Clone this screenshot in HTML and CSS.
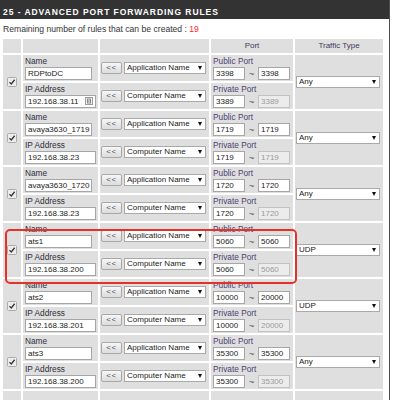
FILE: index.html
```html
<!DOCTYPE html>
<html>
<head>
<meta charset="utf-8">
<link rel="stylesheet" href="styles.css">
</head>
<body>
<div class="page">
  <div class="titlebar">25 - ADVANCED PORT FORWARDING RULES</div>
  <p class="remaining">Remaining number of rules that can be created : <span class="count">19</span></p>
  <table class="rules">
    <colgroup>
      <col class="c-chk"><col class="c-name"><col class="c-app"><col class="c-port"><col class="c-traffic">
    </colgroup>
    <thead>
      <tr><th></th><th></th><th></th><th>Port</th><th>Traffic Type</th></tr>
    </thead>
    <tbody>
      <!-- rule 1 -->
      <tr>
        <td rowspan="2" class="chk"><svg class="cb" width="10" height="10" viewBox="0 0 10 10"><rect x="0.5" y="0.5" width="9" height="9" rx="1" fill="#ececec" stroke="#ababab"/><path d="M2.5 5.2 L4.3 7 L7.6 2.8" fill="none" stroke="#3a3a3a" stroke-width="1.4"/></svg></td>
        <td><div class="cell"><div class="lbl">Name</div><input class="in in-name" type="text" value="RDPtoDC"></div></td>
        <td class="app"><div class="appbox"><button class="btn">&lt;&lt;</button><span class="selwrap"><select class="sel"><option>Application Name</option></select></span></div></td>
        <td><div class="cell portcell"><div class="lbl plbl">Public Port</div><div class="range"><input class="in in-port" type="text" value="3398"><span class="tilde">~</span><input class="in in-port" type="text" value="3398"></div></div></td>
        <td rowspan="2" class="traffic"><span class="selwrap"><select class="sel sel-wide"><option>Any</option></select></span></td>
      </tr>
      <tr>
        <td><div class="cell"><div class="lbl">IP Address</div><span class="ipwrap"><input class="in in-ip" type="text" value="192.168.38.11"><svg class="ipicon" width="8" height="8" viewBox="0 0 8 8"><rect x="0.5" y="0.5" width="7" height="7" fill="#f2f2f2" stroke="#9c9c9c"/><rect x="2.5" y="2" width="3" height="4" fill="none" stroke="#8a8a8a"/><line x1="4" y1="3" x2="4" y2="5" stroke="#8a8a8a"/></svg></span></div></td>
        <td class="app"><div class="appbox"><button class="btn">&lt;&lt;</button><span class="selwrap"><select class="sel"><option>Computer Name</option></select></span></div></td>
        <td><div class="cell portcell"><div class="lbl plbl">Private Port</div><div class="range"><input class="in in-port" type="text" value="3389"><span class="tilde">~</span><input class="in in-port" type="text" value="3389" disabled></div></div></td>
      </tr>
      <!-- rule 2 -->
      <tr>
        <td rowspan="2" class="chk"><svg class="cb" width="10" height="10" viewBox="0 0 10 10"><rect x="0.5" y="0.5" width="9" height="9" rx="1" fill="#ececec" stroke="#ababab"/><path d="M2.5 5.2 L4.3 7 L7.6 2.8" fill="none" stroke="#3a3a3a" stroke-width="1.4"/></svg></td>
        <td><div class="cell"><div class="lbl">Name</div><input class="in in-name" type="text" value="avaya3630_1719"></div></td>
        <td class="app"><div class="appbox"><button class="btn">&lt;&lt;</button><span class="selwrap"><select class="sel"><option>Application Name</option></select></span></div></td>
        <td><div class="cell portcell"><div class="lbl plbl">Public Port</div><div class="range"><input class="in in-port" type="text" value="1719"><span class="tilde">~</span><input class="in in-port" type="text" value="1719"></div></div></td>
        <td rowspan="2" class="traffic"><span class="selwrap"><select class="sel sel-wide"><option>Any</option></select></span></td>
      </tr>
      <tr>
        <td><div class="cell"><div class="lbl">IP Address</div><input class="in in-ip" type="text" value="192.168.38.23"></div></td>
        <td class="app"><div class="appbox"><button class="btn">&lt;&lt;</button><span class="selwrap"><select class="sel"><option>Computer Name</option></select></span></div></td>
        <td><div class="cell portcell"><div class="lbl plbl">Private Port</div><div class="range"><input class="in in-port" type="text" value="1719"><span class="tilde">~</span><input class="in in-port" type="text" value="1719" disabled></div></div></td>
      </tr>
      <!-- rule 3 -->
      <tr>
        <td rowspan="2" class="chk"><svg class="cb" width="10" height="10" viewBox="0 0 10 10"><rect x="0.5" y="0.5" width="9" height="9" rx="1" fill="#ececec" stroke="#ababab"/><path d="M2.5 5.2 L4.3 7 L7.6 2.8" fill="none" stroke="#3a3a3a" stroke-width="1.4"/></svg></td>
        <td><div class="cell"><div class="lbl">Name</div><input class="in in-name" type="text" value="avaya3630_1720"></div></td>
        <td class="app"><div class="appbox"><button class="btn">&lt;&lt;</button><span class="selwrap"><select class="sel"><option>Application Name</option></select></span></div></td>
        <td><div class="cell portcell"><div class="lbl plbl">Public Port</div><div class="range"><input class="in in-port" type="text" value="1720"><span class="tilde">~</span><input class="in in-port" type="text" value="1720"></div></div></td>
        <td rowspan="2" class="traffic"><span class="selwrap"><select class="sel sel-wide"><option>Any</option></select></span></td>
      </tr>
      <tr>
        <td><div class="cell"><div class="lbl">IP Address</div><input class="in in-ip" type="text" value="192.168.38.23"></div></td>
        <td class="app"><div class="appbox"><button class="btn">&lt;&lt;</button><span class="selwrap"><select class="sel"><option>Computer Name</option></select></span></div></td>
        <td><div class="cell portcell"><div class="lbl plbl">Private Port</div><div class="range"><input class="in in-port" type="text" value="1720"><span class="tilde">~</span><input class="in in-port" type="text" value="1720" disabled></div></div></td>
      </tr>
      <!-- rule 4 -->
      <tr>
        <td rowspan="2" class="chk"><svg class="cb" width="10" height="10" viewBox="0 0 10 10"><rect x="0.5" y="0.5" width="9" height="9" rx="1" fill="#ececec" stroke="#ababab"/><path d="M2.5 5.2 L4.3 7 L7.6 2.8" fill="none" stroke="#3a3a3a" stroke-width="1.4"/></svg></td>
        <td><div class="cell"><div class="lbl">Name</div><input class="in in-name" type="text" value="ats1"></div></td>
        <td class="app"><div class="appbox"><button class="btn">&lt;&lt;</button><span class="selwrap"><select class="sel"><option>Application Name</option></select></span></div></td>
        <td><div class="cell portcell"><div class="lbl plbl">Public Port</div><div class="range"><input class="in in-port" type="text" value="5060"><span class="tilde">~</span><input class="in in-port" type="text" value="5060"></div></div></td>
        <td rowspan="2" class="traffic"><span class="selwrap"><select class="sel sel-wide"><option>UDP</option></select></span></td>
      </tr>
      <tr>
        <td><div class="cell"><div class="lbl">IP Address</div><input class="in in-ip" type="text" value="192.168.38.200"></div></td>
        <td class="app"><div class="appbox"><button class="btn">&lt;&lt;</button><span class="selwrap"><select class="sel"><option>Computer Name</option></select></span></div></td>
        <td><div class="cell portcell"><div class="lbl plbl">Private Port</div><div class="range"><input class="in in-port" type="text" value="5060"><span class="tilde">~</span><input class="in in-port" type="text" value="5060" disabled></div></div></td>
      </tr>
      <!-- rule 5 -->
      <tr>
        <td rowspan="2" class="chk"><svg class="cb" width="10" height="10" viewBox="0 0 10 10"><rect x="0.5" y="0.5" width="9" height="9" rx="1" fill="#ececec" stroke="#ababab"/><path d="M2.5 5.2 L4.3 7 L7.6 2.8" fill="none" stroke="#3a3a3a" stroke-width="1.4"/></svg></td>
        <td><div class="cell"><div class="lbl">Name</div><input class="in in-name" type="text" value="ats2"></div></td>
        <td class="app"><div class="appbox"><button class="btn">&lt;&lt;</button><span class="selwrap"><select class="sel"><option>Application Name</option></select></span></div></td>
        <td><div class="cell portcell"><div class="lbl plbl">Public Port</div><div class="range"><input class="in in-port" type="text" value="10000"><span class="tilde">~</span><input class="in in-port" type="text" value="20000"></div></div></td>
        <td rowspan="2" class="traffic"><span class="selwrap"><select class="sel sel-wide"><option>UDP</option></select></span></td>
      </tr>
      <tr>
        <td><div class="cell"><div class="lbl">IP Address</div><input class="in in-ip" type="text" value="192.168.38.201"></div></td>
        <td class="app"><div class="appbox"><button class="btn">&lt;&lt;</button><span class="selwrap"><select class="sel"><option>Computer Name</option></select></span></div></td>
        <td><div class="cell portcell"><div class="lbl plbl">Private Port</div><div class="range"><input class="in in-port" type="text" value="10000"><span class="tilde">~</span><input class="in in-port" type="text" value="20000" disabled></div></div></td>
      </tr>
      <!-- rule 6 -->
      <tr>
        <td rowspan="2" class="chk"><svg class="cb" width="10" height="10" viewBox="0 0 10 10"><rect x="0.5" y="0.5" width="9" height="9" rx="1" fill="#ececec" stroke="#ababab"/><path d="M2.5 5.2 L4.3 7 L7.6 2.8" fill="none" stroke="#3a3a3a" stroke-width="1.4"/></svg></td>
        <td><div class="cell"><div class="lbl">Name</div><input class="in in-name" type="text" value="ats3"></div></td>
        <td class="app"><div class="appbox"><button class="btn">&lt;&lt;</button><span class="selwrap"><select class="sel"><option>Application Name</option></select></span></div></td>
        <td><div class="cell portcell"><div class="lbl plbl">Public Port</div><div class="range"><input class="in in-port" type="text" value="35300"><span class="tilde">~</span><input class="in in-port" type="text" value="35300"></div></div></td>
        <td rowspan="2" class="traffic"><span class="selwrap"><select class="sel sel-wide"><option>Any</option></select></span></td>
      </tr>
      <tr>
        <td><div class="cell"><div class="lbl">IP Address</div><input class="in in-ip" type="text" value="192.168.38.200"></div></td>
        <td class="app"><div class="appbox"><button class="btn">&lt;&lt;</button><span class="selwrap"><select class="sel"><option>Computer Name</option></select></span></div></td>
        <td><div class="cell portcell"><div class="lbl plbl">Private Port</div><div class="range"><input class="in in-port" type="text" value="35300"><span class="tilde">~</span><input class="in in-port" type="text" value="35300" disabled></div></div></td>
      </tr>
      <!-- rule 7 (cut off) -->
      <tr>
        <td class="chk"></td>
        <td><div class="cell"></div></td>
        <td class="app"></td>
        <td><div class="cell portcell"></div></td>
        <td class="traffic"></td>
      </tr>
    </tbody>
  </table>
  <div class="highlight"></div>
</div>
</body>
</html>
```

FILE: styles.css
```css
html, body {
  margin: 0;
  padding: 0;
  background: #ffffff;
}
body {
  font-family: "Liberation Sans", Arial, sans-serif;
  font-size: 8px;
  color: #222;
  height: 400px;
  overflow: hidden;
}
.page {
  position: relative;
  width: 389px;
  border-right: 1px solid #4d4d4d;
  min-height: 400px;
}
.titlebar {
  background: #333333;
  color: #ffffff;
  font-weight: bold;
  font-size: 8.5px;
  letter-spacing: 0.95px;
  height: 19px;
  box-sizing: border-box;
  padding: 6px 0 0 3px;
  line-height: 13px;
  white-space: nowrap;
}
.remaining {
  margin: 0;
  padding: 5px 0 0 3px;
  font-size: 8.6px;
  line-height: 11px;
  color: #333;
  height: 18px;
  box-sizing: border-box;
}
.count {
  color: #ff2a2a;
}
.rules {
  margin: 0 0 0 1px;
  border-collapse: separate;
  border-spacing: 2px;
  table-layout: fixed;
  width: 384px;
  background: #ffffff;
}
.c-chk { width: 18px; }
.c-name { width: 75px; }
.c-app { width: 109px; }
.c-port { width: 82px; }
.c-traffic { width: 88px; }
.rules th, .rules td {
  background: #dfdfdf;
  padding: 0;
}
.rules th {
  height: 14px;
  line-height: 14px;
  font-weight: normal;
  font-size: 8px;
  color: #423a5c;
  text-align: center;
}
.rules td {
  vertical-align: middle;
}
.chk {
  text-align: center;
}
.cb {
  display: block;
  margin: 0 auto;
}
.cell {
  height: 26px;
  box-sizing: border-box;
  padding: 1px 0 0 2px;
}
.portcell {
  padding-left: 2px;
}
.lbl {
  line-height: 11px;
  height: 11px;
  font-size: 8.3px;
  color: #2e2d3a;
  white-space: nowrap;
}
.plbl {
  color: #4d3f72;
}
.in {
  display: block;
  box-sizing: border-box;
  height: 13px;
  margin: 0;
  padding: 0 0 0 2px;
  border: 1px solid #a6a6a6;
  background: #ffffff;
  font-family: "Liberation Sans", Arial, sans-serif;
  font-size: 8px;
  color: #222;
  outline: none;
}
.in:disabled {
  background: #ececec;
  color: #9a9a9a;
  border-color: #c2c2c2;
}
.in-name { width: 67px; }
.in-ip { width: 71px; }
.in-port { width: 32px; }
.ipwrap {
  position: relative;
  display: block;
  width: 71px;
}
.ipicon {
  position: absolute;
  left: 60px;
  top: 2px;
}
.range {
  display: flex;
  align-items: center;
}
.tilde {
  width: 13px;
  text-align: center;
  color: #555;
  font-size: 9.5px;
  line-height: 13px;
}
.appbox {
  display: flex;
  align-items: center;
  padding-left: 1px;
  gap: 2px;
}
.btn {
  box-sizing: border-box;
  width: 21px;
  height: 12px;
  padding: 0;
  margin: 0;
  border: 1px solid #a8a8a8;
  border-radius: 2px;
  background: linear-gradient(#f7f7f7, #dcdcdc);
  font-family: "Liberation Sans", Arial, sans-serif;
  font-size: 8px;
  line-height: 10px;
  color: #555;
  letter-spacing: 0.5px;
}
.selwrap {
  position: relative;
  display: inline-block;
}
.selwrap::after {
  content: "";
  position: absolute;
  right: 4px;
  top: 4px;
  border-left: 2.5px solid transparent;
  border-right: 2.5px solid transparent;
  border-top: 4px solid #111;
  pointer-events: none;
}
.sel {
  -webkit-appearance: none;
  appearance: none;
  display: block;
  box-sizing: border-box;
  width: 82px;
  height: 12px;
  margin: 0;
  padding: 0 0 0 2px;
  border: 1px solid #a9a9a9;
  border-radius: 0;
  background: #ffffff;
  font-family: "Liberation Sans", Arial, sans-serif;
  font-size: 8px;
  line-height: 10px;
  color: #222;
}
.sel-wide {
  width: 84px;
}
.traffic .selwrap {
  margin-left: 1px;
}
.highlight {
  position: absolute;
  left: 5px;
  top: 229px;
  width: 292px;
  height: 55px;
  box-sizing: border-box;
  border: 2px solid #e4322b;
  border-radius: 5px;
  pointer-events: none;
}
```
